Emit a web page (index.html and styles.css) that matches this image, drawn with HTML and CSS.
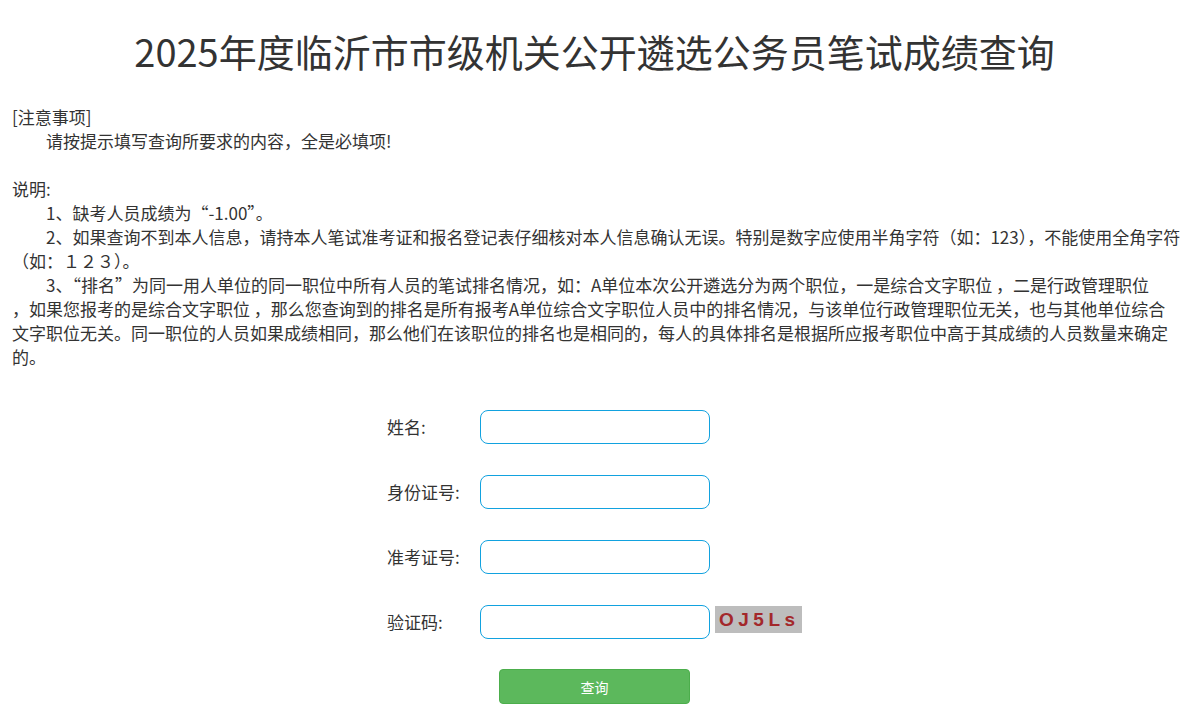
FILE: index.html
```html
<!DOCTYPE html>
<html lang="zh-CN">
<head>
<meta charset="utf-8">
<title>2025年度临沂市市级机关公开遴选公务员笔试成绩查询</title>
<link rel="stylesheet" href="styles.css">
</head>
<body>
<div class="page">
  <h1 class="title">2025年度临沂市市级机关公开遴选公务员笔试成绩查询</h1>
  <div class="notice">
    <p>[注意事项]</p>
    <p class="indent gap">请按提示填写查询所要求的内容，全是必填项!</p>
    <p>说明:</p>
    <p class="indent">1、缺考人员成绩为“-1.00”。</p>
    <p class="indent">2、如果查询不到本人信息，请持本人笔试准考证和报名登记表仔细核对本人信息确认无误。特别是数字应使用半角字符（如：123），不能使用全角字符<br>（如：１２３）。</p>
    <p class="indent">3、“排名”为同一用人单位的同一职位中所有人员的笔试排名情况，如：A单位本次公开遴选分为两个职位，一是综合文字职位 ，二是行政管理职位<br>，如果您报考的是综合文字职位 ，那么您查询到的排名是所有报考A单位综合文字职位人员中的排名情况，与该单位行政管理职位无关，也与其他单位综合<br>文字职位无关。同一职位的人员如果成绩相同，那么他们在该职位的排名也是相同的，每人的具体排名是根据所应报考职位中高于其成绩的人员数量来确定<br>的。</p>
  </div>
  <form class="query" onsubmit="return false;">
    <div class="row">
      <label class="label" for="xm">姓名:</label>
      <input class="field" id="xm" type="text">
    </div>
    <div class="row">
      <label class="label" for="sfz">身份证号:</label>
      <input class="field" id="sfz" type="text">
    </div>
    <div class="row">
      <label class="label" for="zkz">准考证号:</label>
      <input class="field" id="zkz" type="text">
    </div>
    <div class="row">
      <label class="label" for="yzm">验证码:</label>
      <input class="field" id="yzm" type="text">
      <span class="captcha">OJ5Ls</span>
    </div>
    <button class="submit" type="submit">查询</button>
  </form>
</div>
</body>
</html>
```

FILE: styles.css
```css
html, body {
  margin: 0;
  padding: 0;
  background: #fff;
}

body {
  font-family: "Noto Sans CJK SC", "Noto Sans", sans-serif;
  color: #333;
}

.page {
  padding: 0 12px;
}

.title {
  margin: 24px 0 0;
  padding-right: 3px;
  font-size: 38px;
  line-height: 53px;
  font-weight: normal;
  text-align: center;
  color: #333;
}

.notice {
  margin-top: 28px;
  margin-right: -8px;
  font-size: 17px;
  line-height: 24px;
}

.notice p {
  margin: 0;
}

.notice .indent {
  text-indent: 2em;
}

.notice .gap {
  margin-bottom: 24px;
}

.query {
  margin-top: 41px;
  padding-right: 3px;
  display: flex;
  flex-direction: column;
  align-items: center;
  gap: 31px;
}

.row {
  width: 415px;
  height: 34px;
  display: flex;
  align-items: center;
}

.label {
  width: 93px;
  flex: none;
  font-size: 17px;
  line-height: 24px;
  color: #333;
}

.field {
  box-sizing: border-box;
  width: 230px;
  height: 34px;
  margin: 0;
  padding: 0 10px;
  border: 1px solid #12a2df;
  border-radius: 8px;
  background: #fff;
  outline: none;
  font-size: 16px;
}

.captcha {
  box-sizing: border-box;
  align-self: flex-start;
  width: 87px;
  height: 27px;
  margin: 1px 0 0 5px;
  padding-left: 4px;
  background: #bdbdbd;
  color: #a3282b;
  font-family: "Liberation Sans", Arial, sans-serif;
  font-weight: bold;
  font-size: 19px;
  line-height: 27px;
  letter-spacing: 4.5px;
  white-space: nowrap;
}

.submit {
  margin-top: -1px;
  width: 191px;
  height: 35px;
  border: 1px solid #4cae4c;
  border-radius: 4px;
  background: #5cb85c;
  color: #fff;
  font-family: "Noto Sans CJK SC", sans-serif;
  font-size: 14px;
  cursor: pointer;
}
```
